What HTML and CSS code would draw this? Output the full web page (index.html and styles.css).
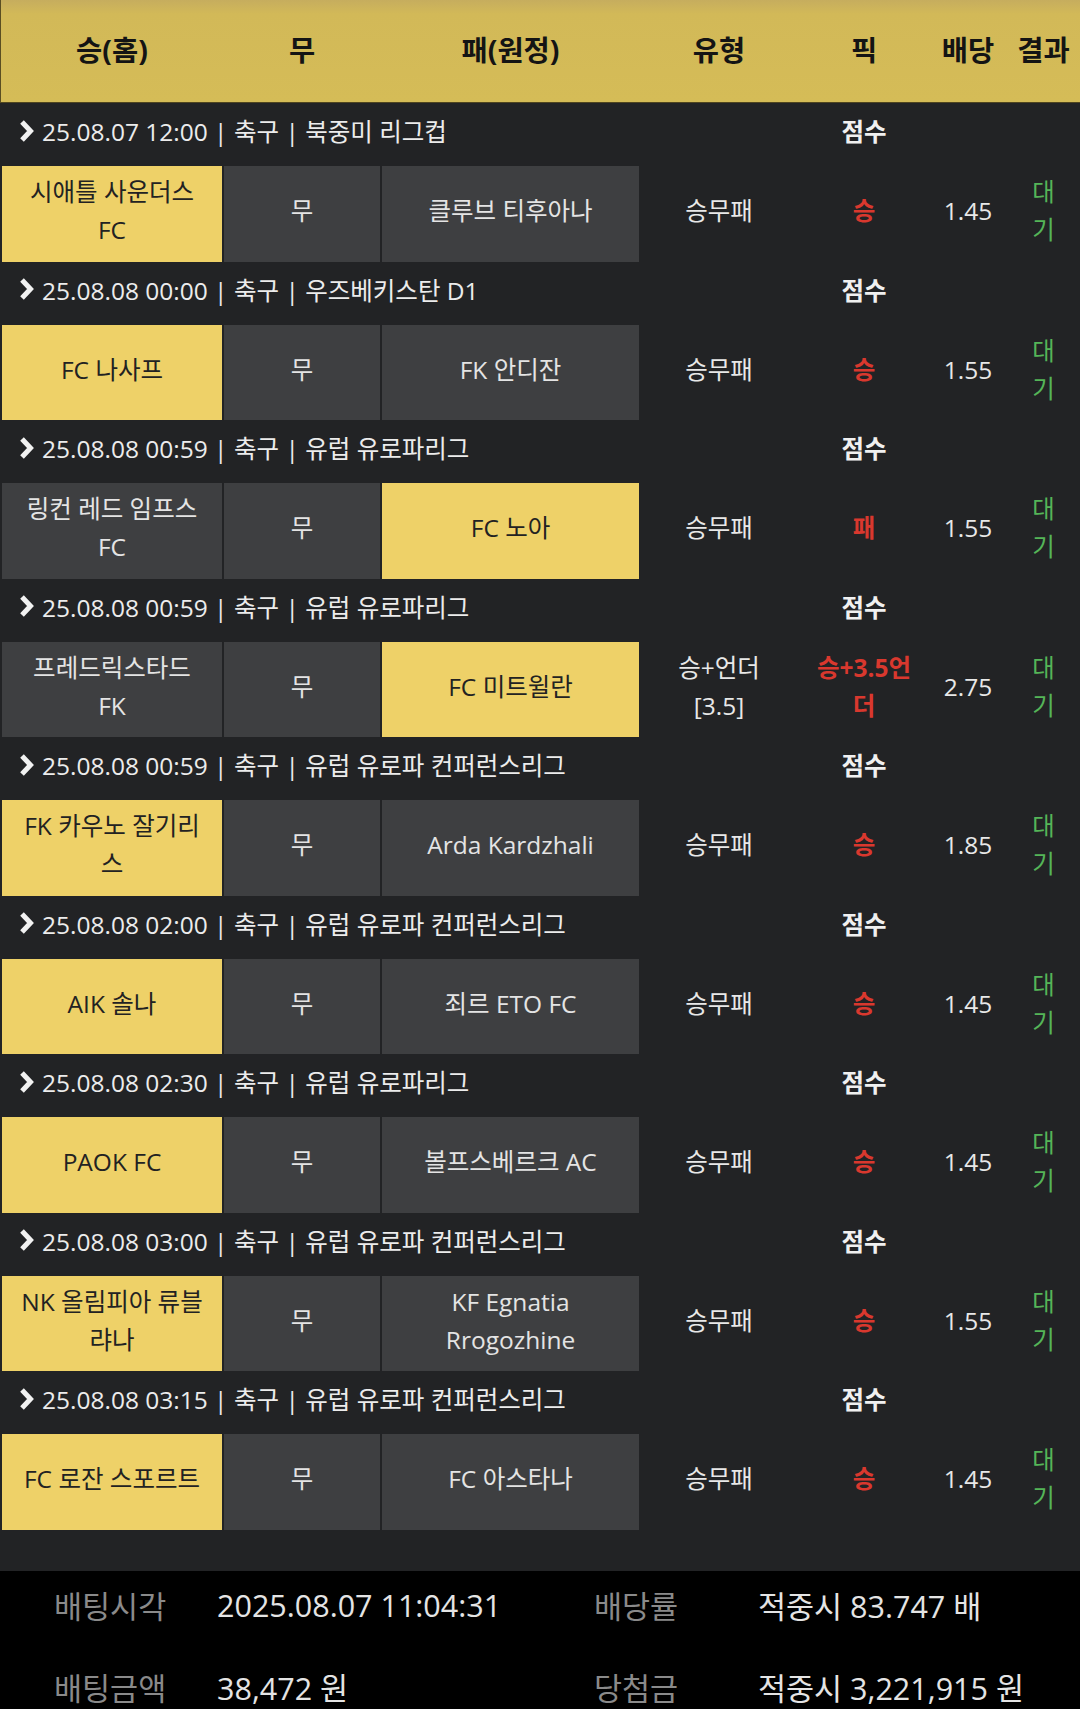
FILE: index.html
```html
<!DOCTYPE html>
<html lang="ko">
<head>
<meta charset="utf-8">
<title>배팅내역</title>
<link rel="stylesheet" href="styles.css">
</head>
<body>
<div class="board">
  <div class="thead row-grid">
    <div>승(홈)</div><div>무</div><div>패(원정)</div><div>유형</div><div>픽</div><div>배당</div><div>결과</div>
  </div>

  <div class="match">
    <div class="info row-grid"><div class="when"><svg class="chev" viewBox="0 0 15 24" width="15" height="24"><polyline points="3,3 11.5,12 3,21"/></svg>25.08.07 12:00 | 축구 | 북중미 리그컵</div><div class="score">점수</div></div>
    <div class="picks row-grid"><div class="cell on">시애틀 사운더스 FC</div><div class="cell">무</div><div class="cell away">클루브 티후아나</div><div class="txt type">승무패</div><div class="txt pick">승</div><div class="txt">1.45</div><div class="txt res">대기</div></div>
  </div>

  <div class="match">
    <div class="info row-grid"><div class="when"><svg class="chev" viewBox="0 0 15 24" width="15" height="24"><polyline points="3,3 11.5,12 3,21"/></svg>25.08.08 00:00 | 축구 | 우즈베키스탄 D1</div><div class="score">점수</div></div>
    <div class="picks row-grid"><div class="cell on">FC 나사프</div><div class="cell">무</div><div class="cell away">FK 안디잔</div><div class="txt type">승무패</div><div class="txt pick">승</div><div class="txt">1.55</div><div class="txt res">대기</div></div>
  </div>

  <div class="match">
    <div class="info row-grid"><div class="when"><svg class="chev" viewBox="0 0 15 24" width="15" height="24"><polyline points="3,3 11.5,12 3,21"/></svg>25.08.08 00:59 | 축구 | 유럽 유로파리그</div><div class="score">점수</div></div>
    <div class="picks row-grid"><div class="cell">링컨 레드 임프스 FC</div><div class="cell">무</div><div class="cell away on">FC 노아</div><div class="txt type">승무패</div><div class="txt pick">패</div><div class="txt">1.55</div><div class="txt res">대기</div></div>
  </div>

  <div class="match">
    <div class="info row-grid"><div class="when"><svg class="chev" viewBox="0 0 15 24" width="15" height="24"><polyline points="3,3 11.5,12 3,21"/></svg>25.08.08 00:59 | 축구 | 유럽 유로파리그</div><div class="score">점수</div></div>
    <div class="picks row-grid"><div class="cell">프레드릭스타드 FK</div><div class="cell">무</div><div class="cell away on">FC 미트윌란</div><div class="txt type">승+언더 [3.5]</div><div class="txt pick">승+3.5언더</div><div class="txt">2.75</div><div class="txt res">대기</div></div>
  </div>

  <div class="match">
    <div class="info row-grid"><div class="when"><svg class="chev" viewBox="0 0 15 24" width="15" height="24"><polyline points="3,3 11.5,12 3,21"/></svg>25.08.08 00:59 | 축구 | 유럽 유로파 컨퍼런스리그</div><div class="score">점수</div></div>
    <div class="picks row-grid"><div class="cell on">FK 카우노 잘기리스</div><div class="cell">무</div><div class="cell away">Arda Kardzhali</div><div class="txt type">승무패</div><div class="txt pick">승</div><div class="txt">1.85</div><div class="txt res">대기</div></div>
  </div>

  <div class="match">
    <div class="info row-grid"><div class="when"><svg class="chev" viewBox="0 0 15 24" width="15" height="24"><polyline points="3,3 11.5,12 3,21"/></svg>25.08.08 02:00 | 축구 | 유럽 유로파 컨퍼런스리그</div><div class="score">점수</div></div>
    <div class="picks row-grid"><div class="cell on">AIK 솔나</div><div class="cell">무</div><div class="cell away">죄르 ETO FC</div><div class="txt type">승무패</div><div class="txt pick">승</div><div class="txt">1.45</div><div class="txt res">대기</div></div>
  </div>

  <div class="match">
    <div class="info row-grid"><div class="when"><svg class="chev" viewBox="0 0 15 24" width="15" height="24"><polyline points="3,3 11.5,12 3,21"/></svg>25.08.08 02:30 | 축구 | 유럽 유로파리그</div><div class="score">점수</div></div>
    <div class="picks row-grid"><div class="cell on">PAOK FC</div><div class="cell">무</div><div class="cell away">볼프스베르크 AC</div><div class="txt type">승무패</div><div class="txt pick">승</div><div class="txt">1.45</div><div class="txt res">대기</div></div>
  </div>

  <div class="match">
    <div class="info row-grid"><div class="when"><svg class="chev" viewBox="0 0 15 24" width="15" height="24"><polyline points="3,3 11.5,12 3,21"/></svg>25.08.08 03:00 | 축구 | 유럽 유로파 컨퍼런스리그</div><div class="score">점수</div></div>
    <div class="picks row-grid"><div class="cell on">NK 올림피아 류블랴나</div><div class="cell">무</div><div class="cell away">KF Egnatia Rrogozhine</div><div class="txt type">승무패</div><div class="txt pick">승</div><div class="txt">1.55</div><div class="txt res">대기</div></div>
  </div>

  <div class="match">
    <div class="info row-grid"><div class="when"><svg class="chev" viewBox="0 0 15 24" width="15" height="24"><polyline points="3,3 11.5,12 3,21"/></svg>25.08.08 03:15 | 축구 | 유럽 유로파 컨퍼런스리그</div><div class="score">점수</div></div>
    <div class="picks row-grid"><div class="cell on">FC 로잔 스포르트</div><div class="cell">무</div><div class="cell away">FC 아스타나</div><div class="txt type">승무패</div><div class="txt pick">승</div><div class="txt">1.45</div><div class="txt res">대기</div></div>
  </div>
</div>

<div class="summary">
  <div class="label">배팅시각</div><div class="value">2025.08.07 11:04:31</div>
  <div class="label">배당률</div><div class="value">적중시 83.747 배</div>
  <div class="label">배팅금액</div><div class="value">38,472 원</div>
  <div class="label">당첨금</div><div class="value">적중시 3,221,915 원</div>
</div>
</body>
</html>
```
FILE: styles.css
```css
html, body {
  margin: 0;
  padding: 0;
}
body {
  background: #222325;
  font-family: "Open Sans", "Noto Sans CJK KR", sans-serif;
  color: #e6e6e6;
  width: 1080px;
  height: 1709px;
  overflow: hidden;
}
.row-grid {
  display: grid;
  grid-template-columns: 220px 156px 257px 156px 130px 74px 73px;
  column-gap: 2px;
  padding-left: 2px;
}
.thead {
  height: 103px;
  box-sizing: border-box;
  padding-bottom: 6px;
  align-items: center;
  background: linear-gradient(#c6ad5e 0, #d2b958 14px, #d5bc57 100%);
  border-left: 1px solid #5a4e22;
  border-bottom: 1px solid #4f4520;
  padding-left: 1px;
  color: #141414;
  font-weight: 700;
  font-size: 28.5px;
  text-align: center;
}
.board {
  padding-bottom: 41px;
}
.info {
  height: 63px;
  box-sizing: border-box;
  padding-bottom: 8px;
  align-items: center;
  font-size: 24.5px;
  color: #ececec;
}
.when {
  grid-column: 1 / 5;
  display: flex;
  align-items: center;
  padding-left: 17px;
  white-space: nowrap;
}
.chev {
  margin-right: 8px;
  fill: none;
  stroke: #f2f2f2;
  stroke-width: 5;
  stroke-linejoin: miter;
}
.score {
  text-align: center;
  font-weight: 700;
  color: #f0f0f0;
}
.picks {
  height: 95.5px;
  font-size: 24.5px;
  line-height: 38px;
}
.cell {
  display: flex;
  align-items: center;
  justify-content: center;
  text-align: center;
  padding: 0 16px 5px;
  background: #3e3f41;
  color: #e4e4e4;
}
.cell.away {
  padding: 0 20px 5px;
}
.cell.on {
  background: #eed168;
  color: #222;
}
.txt {
  display: flex;
  align-items: center;
  justify-content: center;
  text-align: center;
  padding-bottom: 5px;
  color: #e8e8e8;
}
.type {
  padding: 0 20px 5px;
}
.pick {
  padding: 0 12px 5px;
  color: #d9382e;
  font-weight: 700;
}
.res {
  padding: 0 18px 5px;
  color: #55b558;
}
.summary {
  background: #000;
  display: grid;
  grid-template-columns: 217px 323px 218px 322px;
  grid-auto-rows: 68px;
  row-gap: 14px;
  align-items: center;
  font-size: 30.5px;
}
.label {
  padding-left: 54px;
  color: #8a8a8a;
}
.value {
  color: #e4e4e4;
}
```
